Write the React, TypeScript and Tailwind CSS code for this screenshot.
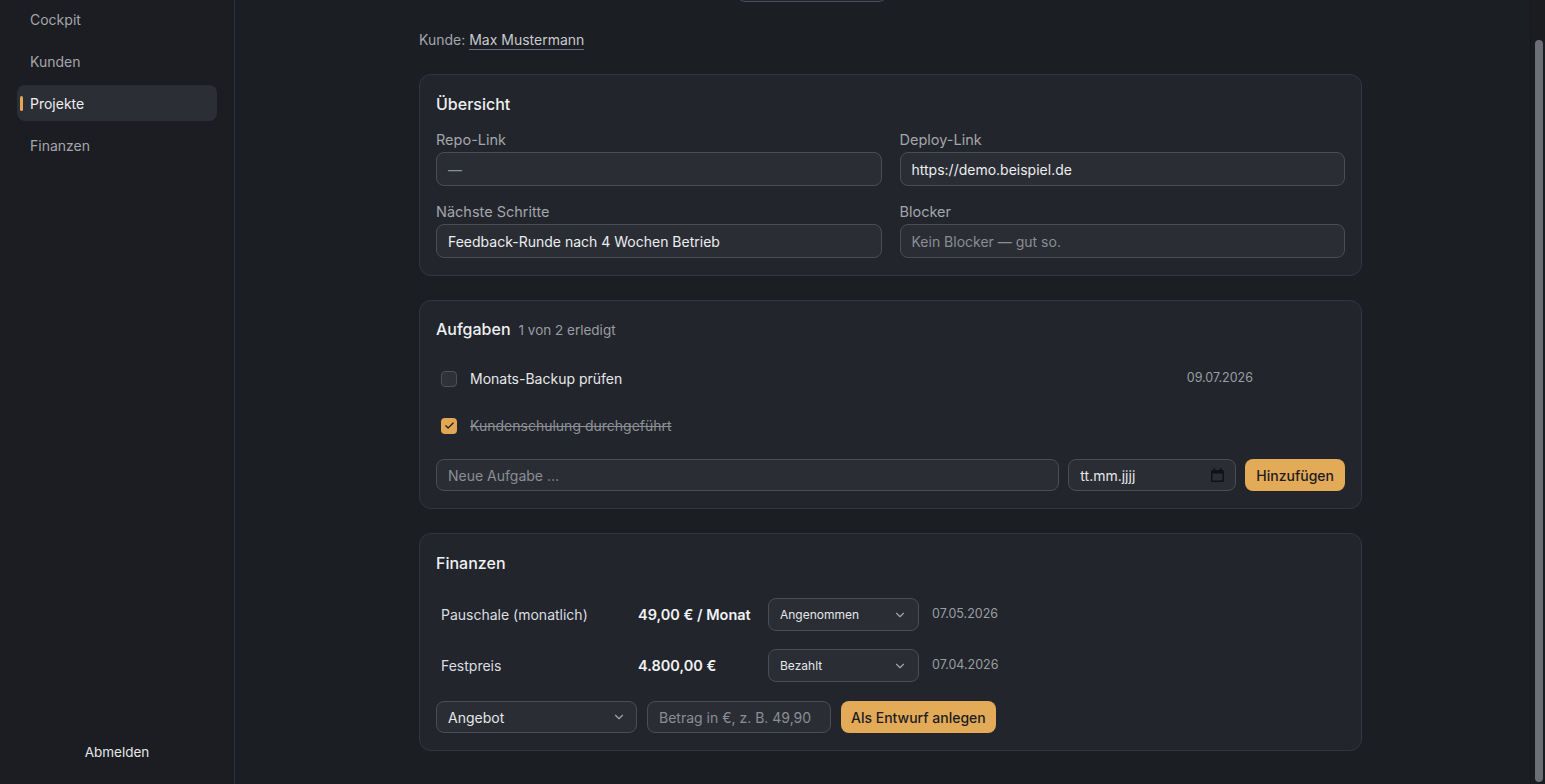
import React, { useLayoutEffect, useRef } from "react";

const font = { fontFamily: "Inter, 'Noto Sans', sans-serif" };

function Chevron({ className = "" }: { className?: string }) {
  return (
    <svg width="14" height="14" viewBox="0 0 24 24" fill="none" stroke="currentColor" strokeWidth="2" strokeLinecap="round" strokeLinejoin="round" className={className}>
      <path d="m6 9 6 6 6-6" />
    </svg>
  );
}

function Field({ label, value, placeholder }: { label: string; value?: string; placeholder?: string }) {
  return (
    <div className="flex flex-col gap-[2px]">
      <div className="text-[14.5px] leading-5 text-[#a3a6ac]">{label}</div>
      <div className="h-[34px] rounded-lg border border-[#4a4d55] bg-[#2a2d34] px-[11px] flex items-center text-[14px]">
        {value ? <span className="text-[#eceef0]">{value}</span> : <span className="text-[#8b8e95]">{placeholder}</span>}
      </div>
    </div>
  );
}

function Card({ children }: { children: React.ReactNode }) {
  return <section className="rounded-xl border border-[#33363d] bg-[#22252b] px-4 pt-[17px] pb-[17px]">{children}</section>;
}

function Check({ checked }: { checked?: boolean }) {
  return checked ? (
    <div className="w-4 h-4 rounded-[4px] bg-[#e2a755] flex items-center justify-center">
      <svg width="11" height="11" viewBox="0 0 24 24" fill="none" stroke="#1b1d22" strokeWidth="2.6" strokeLinecap="round" strokeLinejoin="round">
        <path d="M4 12.5l5 5L20 6.5" />
      </svg>
    </div>
  ) : (
    <div className="w-4 h-4 rounded-[4px] border border-[#4e5159] bg-[#2e3138]" />
  );
}

export default function App() {
  const ref = useRef<HTMLDivElement>(null);
  useLayoutEffect(() => {
    if (ref.current) ref.current.scrollTop = 9999;
  }, []);

  const nav = ["Cockpit", "Kunden", "Projekte", "Finanzen"];

  return (
    <div style={font} className="h-screen flex bg-[#1b1e23] text-[#e6e7e9]">
      <div ref={ref} className="flex-1 overflow-y-auto [scrollbar-width:none]">
        <div className="flex">
          <aside className="w-[235px] shrink-0 border-r border-[#2c2f35] bg-[#1b1d22] px-[17px] flex flex-col">
            <div className="h-[44px]" />
            <nav className="flex flex-col gap-[6px]">
              {nav.map((n) => {
                const active = n === "Projekte";
                return (
                  <div key={n} className={`h-9 rounded-lg flex items-center pl-[3px] gap-[7px] text-[14px] ${active ? "bg-[#2b2e35] text-[#eef0f2]" : "text-[#a3a6ac]"}`}>
                    <span className={`w-[3px] h-[15px] rounded-full ${active ? "bg-[#e2a755]" : "bg-transparent"}`} />
                    <span>{n}</span>
                  </div>
                );
              })}
            </nav>
            <div className="mt-auto mb-[14px] h-9 flex items-center justify-center text-[13.5px] text-[#e6e7e9]">Abmelden</div>
          </aside>

          <main className="flex-1 pl-4 pt-[11px] pb-[33px]">
            <div className="max-w-[943px] mx-auto w-full">
              <div className="h-[34px] flex items-center">
                <div className="w-[306px]" />
                <div className="ml-3 w-[150px] h-[34px] rounded-lg border border-[#4a4d55] bg-[#22252b]" />
              </div>

              <div className="mt-[28px] text-[14px] leading-5 text-[#a3a6ac]">
                Kunde: <span className="inline-block border-b border-[#6b6e75] leading-[19px] text-[#c8cace]">Max Mustermann</span>
              </div>

              <div className="mt-[24px] flex flex-col gap-6">
                <Card>
                  <h2 className="text-[16px] leading-6 font-medium text-[#eef0f2] mb-[14px]">Übersicht</h2>
                  <div className="grid grid-cols-2 gap-x-[18px] gap-y-4">
                    <Field label="Repo-Link" placeholder="—" />
                    <Field label="Deploy-Link" value="https://demo.beispiel.de" />
                    <Field label="Nächste Schritte" value="Feedback-Runde nach 4 Wochen Betrieb" />
                    <Field label="Blocker" placeholder="Kein Blocker — gut so." />
                  </div>
                </Card>

                <Card>
                  <div className="flex items-baseline gap-[8px] leading-6 -mt-px">
                    <h2 className="text-[16px] font-medium text-[#eef0f2]">Aufgaben</h2>
                    <span className="text-[13.5px] text-[#9a9da3]">1 von 2 erledigt</span>
                  </div>
                  <div className="mt-[13px] flex flex-col">
                    <div className="h-[47px] flex items-center pl-[5px] pr-[92px] gap-[13px]">
                      <Check />
                      <span className="flex-1 text-[14px] text-[#e6e7e9]">Monats-Backup prüfen</span>
                      <span className="text-[12.5px] text-[#9a9da3]">09.07.2026</span>
                    </div>
                    <div className="h-[47px] flex items-center pl-[5px] pr-[92px] gap-[13px]">
                      <Check checked />
                      <span className="flex-1 text-[14px] text-[#8d9096] line-through">Kundenschulung durchgeführt</span>
                    </div>
                  </div>
                  <div className="mt-[10px] flex items-center gap-[9px]">
                    <div className="flex-1 h-8 rounded-lg border border-[#4a4d55] bg-[#2a2d34] px-[11px] flex items-center text-[14px] text-[#8b8e95]">Neue Aufgabe …</div>
                    <div className="w-[168px] h-8 rounded-lg border border-[#4a4d55] bg-[#2a2d34] px-[11px] flex items-center justify-between text-[14px] text-[#e6e7e9]">
                      <span>tt.mm.jjjj</span>
                      <svg width="13" height="14" viewBox="0 0 13 14" fill="#111214">
                        <rect x="2.5" y="0" width="1.6" height="2.5" />
                        <rect x="8.9" y="0" width="1.6" height="2.5" />
                        <path d="M1.5 2h10A1.5 1.5 0 0 1 13 3.5v9a1.5 1.5 0 0 1-1.5 1.5h-10A1.5 1.5 0 0 1 0 12.5v-9A1.5 1.5 0 0 1 1.5 2Zm0 3.5v7h10v-7Z" />
                      </svg>
                    </div>
                    <button className="h-8 px-[11px] rounded-lg bg-[#e3aa58] text-[14px] font-medium text-[#1b1d22]">Hinzufügen</button>
                  </div>
                </Card>

                <Card>
                  <h2 className="text-[16px] leading-6 font-medium text-[#eef0f2]">Finanzen</h2>
                  <div className="mt-[14px] flex flex-col">
                    {[
                      { l: "Pauschale (monatlich)", a: "49,00 € / Monat", s: "Angenommen", d: "07.05.2026" },
                      { l: "Festpreis", a: "4.800,00 €", s: "Bezahlt", d: "07.04.2026" },
                    ].map((r) => (
                      <div key={r.l} className="h-[51px] flex items-center pl-[5px]">
                        <span className="w-[197px] text-[14px] text-[#dcdee1]">{r.l}</span>
                        <span className="w-[130px] text-[14.5px] font-semibold text-[#f1f2f4]">{r.a}</span>
                        <div className="w-[151px] h-[33px] rounded-lg border border-[#4a4d55] bg-[#2a2d34] pl-[11px] pr-[11px] flex items-center justify-between text-[12px] text-[#e6e7e9]">
                          <span>{r.s}</span>
                          <Chevron className="text-[#a0a3a9]" />
                        </div>
                        <span className="ml-[13px] text-[12.5px] text-[#9a9da3]">{r.d}</span>
                      </div>
                    ))}
                  </div>
                  <div className="mt-[10px] flex items-center gap-[10px]">
                    <div className="w-[201px] h-8 rounded-lg border border-[#4a4d55] bg-[#2a2d34] pl-[11px] pr-[10px] flex items-center justify-between text-[14px] text-[#e6e7e9]">
                      <span>Angebot</span>
                      <Chevron className="text-[#a0a3a9]" />
                    </div>
                    <div className="w-[184px] h-8 rounded-lg border border-[#4a4d55] bg-[#2a2d34] px-[11px] flex items-center whitespace-nowrap overflow-hidden text-[14px] text-[#8b8e95]">Betrag in €, z. B. 49,90</div>
                    <button className="h-8 px-[10px] rounded-lg bg-[#e3aa58] text-[14px] font-medium text-[#1b1d22] whitespace-nowrap">Als Entwurf anlegen</button>
                  </div>
                </Card>
              </div>
            </div>
          </main>
        </div>
      </div>
      <div className="w-[15px] shrink-0 bg-[#1a1c20] border-l border-[#16181c] pl-[4px] pt-[40px] pb-[2px] flex">
        <div className="w-2 rounded-full bg-[#6b6e75]" />
      </div>
    </div>
  );
}
